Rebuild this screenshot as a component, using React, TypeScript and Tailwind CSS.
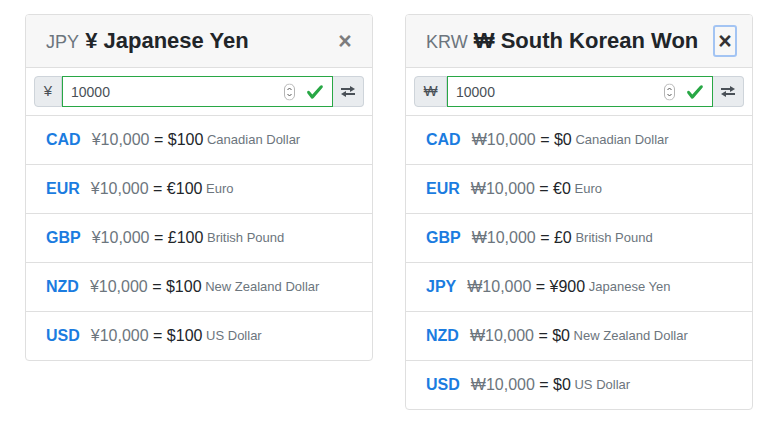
import { useState } from 'react'

type Rate = { code: string; amount: string; name: string }

type Card = {
  code: string
  symbol: string
  name: string
  focused?: boolean
  addonW: string
  rates: Rate[]
}

const cards: Card[] = [
  {
    code: 'JPY',
    symbol: '¥',
    name: 'Japanese Yen',
    addonW: 'w-[28px]',
    rates: [
      { code: 'CAD', amount: '$100', name: 'Canadian Dollar' },
      { code: 'EUR', amount: '€100', name: 'Euro' },
      { code: 'GBP', amount: '£100', name: 'British Pound' },
      { code: 'NZD', amount: '$100', name: 'New Zealand Dollar' },
      { code: 'USD', amount: '$100', name: 'US Dollar' },
    ],
  },
  {
    code: 'KRW',
    symbol: '₩',
    name: 'South Korean Won',
    focused: true,
    addonW: 'w-[33px]',
    rates: [
      { code: 'CAD', amount: '$0', name: 'Canadian Dollar' },
      { code: 'EUR', amount: '€0', name: 'Euro' },
      { code: 'GBP', amount: '£0', name: 'British Pound' },
      { code: 'JPY', amount: '¥900', name: 'Japanese Yen' },
      { code: 'NZD', amount: '$0', name: 'New Zealand Dollar' },
      { code: 'USD', amount: '$0', name: 'US Dollar' },
    ],
  },
]

function Spinner() {
  return (
    <svg width="11" height="17" viewBox="0 0 11 17" className="absolute right-[38px] top-1/2 -translate-y-1/2">
      <rect x="0.5" y="0.5" width="10" height="16" rx="5" fill="#fff" stroke="#b5b5b5" />
      <path d="M3.5 6.5 L5.5 4.5 L7.5 6.5" fill="none" stroke="#555" strokeWidth="1" />
      <path d="M3.5 10.5 L5.5 12.5 L7.5 10.5" fill="none" stroke="#555" strokeWidth="1" />
    </svg>
  )
}

function Check() {
  return (
    <svg width="18" height="18" viewBox="0 0 8 8" className="absolute right-[9px] top-1/2 -translate-y-1/2">
      <path fill="#28a745" d="M2.3 6.73L.6 4.53c-.4-1.04.46-1.4 1.1-.8l1.1 1.4 3.4-3.8c.6-.63 1.6-.27 1.2.7l-4 4.6c-.43.5-.8.4-1.1.1z" />
    </svg>
  )
}

function Swap() {
  return (
    <svg width="14" height="11" viewBox="0 0 14 11">
      <path d="M0 3 H10" stroke="#495057" strokeWidth="1.8" />
      <path d="M9 0 L14 3 L9 6 Z" fill="#495057" />
      <path d="M4 8 H14" stroke="#495057" strokeWidth="1.8" />
      <path d="M5 5 L0 8 L5 11 Z" fill="#495057" />
    </svg>
  )
}

function CurrencyCard({ card }: { card: Card }) {
  const [value, setValue] = useState('10000')
  return (
    <div className="w-[348px] bg-white border border-[#dfdfdf] rounded-[4px] overflow-hidden">
      {/* Header */}
      <div className="h-[53px] flex items-center justify-between pl-5 pr-[15px] bg-[#f7f7f7] border-b border-[#dfdfdf]">
        <h4 className="text-[22px] leading-none text-[#212529] whitespace-nowrap">
          <span className="text-[18px] text-[#6c757d]">{card.code}</span>{' '}
          <span className="font-bold">{card.symbol} {card.name}</span>
        </h4>
        <button
          className={
            'w-[24px] h-[32px] flex items-center justify-center rounded-[3px] text-[23px] font-bold leading-none ' +
            (card.focused ? 'border-[2px] border-[#a3c4f3] text-[#333]' : 'border-[2px] border-transparent text-[#7d7d7d]')
          }
        >
          ×
        </button>
      </div>

      {/* Amount input */}
      <div className="p-2 border-b border-[#dfdfdf]">
        <div className="flex h-[31px]">
          <span className={`${card.addonW} flex items-center justify-center bg-[#e9ecef] border border-[#ced4da] rounded-l-[4px] text-[15px] text-[#495057]`}>
            {card.symbol}
          </span>
          <div className="relative flex-1">
            <input
              type="text"
              value={value}
              onChange={e => setValue(e.target.value)}
              className="w-full h-full px-2 border border-[#28a745] text-[14px] text-[#495057] bg-white outline-none"
            />
            <Spinner />
            <Check />
          </div>
          <span className="w-[31px] flex items-center justify-center bg-[#e9ecef] border border-l-0 border-[#ced4da] rounded-r-[4px]">
            <Swap />
          </span>
        </div>
      </div>

      {/* Rates */}
      <ul className="divide-y divide-[#dfdfdf]">
        {card.rates.map(r => (
          <li key={r.code} className="h-[48px] box-content flex items-center px-5 whitespace-nowrap">
            <a className="text-[16px] font-bold text-[#1b7ce0] mr-[11px]">{r.code}</a>
            <span className="text-[16px] text-[#6c757d]">{card.symbol}10,000</span>
            <span className="text-[16px] text-[#212529]">&nbsp;= {r.amount}</span>
            <span className="text-[13px] text-[#6c757d]">&nbsp;{r.name}</span>
          </li>
        ))}
      </ul>
    </div>
  )
}

export default function App() {
  return (
    <div className="min-h-screen bg-white flex items-start gap-[32px] pl-[25px] pt-[14px]" style={{ fontFamily: '"Liberation Sans", Arial, sans-serif' }}>
      {cards.map(c => (
        <CurrencyCard key={c.code} card={c} />
      ))}
    </div>
  )
}
